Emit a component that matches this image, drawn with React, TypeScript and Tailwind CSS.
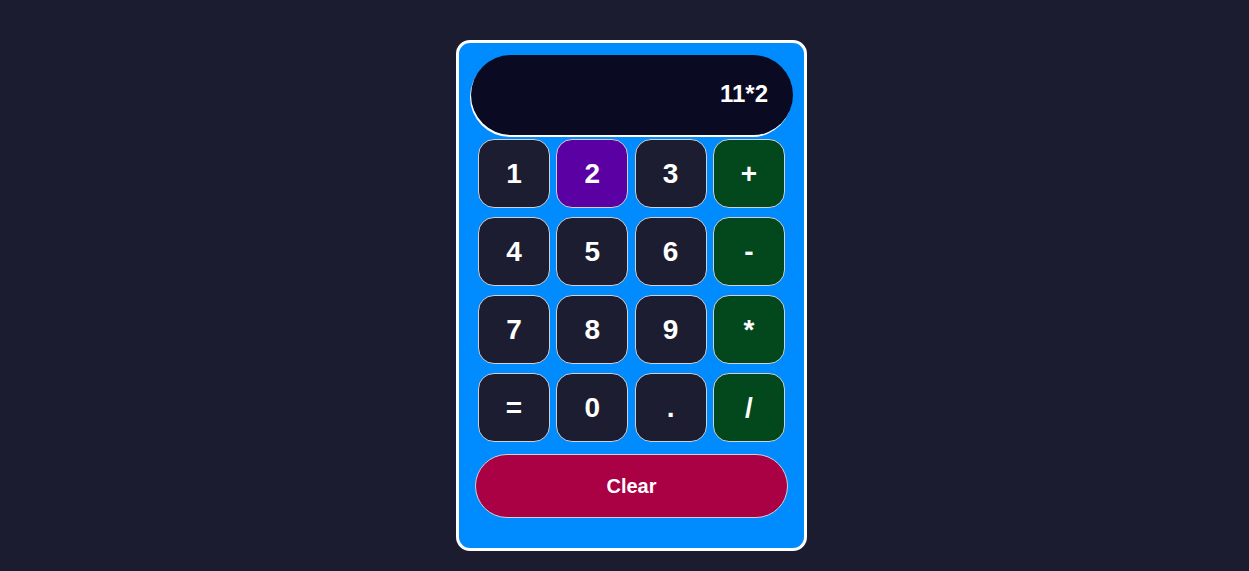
import React from "react";

const keys: { label: string; kind: "num" | "op" | "active" }[] = [
  { label: "1", kind: "num" },
  { label: "2", kind: "active" },
  { label: "3", kind: "num" },
  { label: "+", kind: "op" },
  { label: "4", kind: "num" },
  { label: "5", kind: "num" },
  { label: "6", kind: "num" },
  { label: "-", kind: "op" },
  { label: "7", kind: "num" },
  { label: "8", kind: "num" },
  { label: "9", kind: "num" },
  { label: "*", kind: "op" },
  { label: "=", kind: "num" },
  { label: "0", kind: "num" },
  { label: ".", kind: "num" },
  { label: "/", kind: "op" },
];

export default function App() {
  return (
    <div
      className="flex min-h-[571px] w-full justify-center bg-[#1c1c30] pl-[14px] pt-[40px]"
      style={{ fontFamily: '"Liberation Sans", Arial, sans-serif' }}
    >
      <div className="h-fit w-[351px] rounded-[14px] border-[3px] border-white bg-[#008cff] pl-[12px] pr-[11px] pt-[12px] pb-[30px]">
        <div className="flex h-[80px] w-[322px] items-center justify-end rounded-full bg-[#0a0a22] pb-[3px] pr-[25px] shadow-[-1px_2px_0_#ffffff]">
          <span className="text-[24px] font-bold text-white">11*2</span>
        </div>
        <div className="ml-[7px] mt-[4px] grid w-[307px] grid-cols-4 gap-x-[6.33px] gap-y-[9px]">
          {keys.map((k) => (
            <button
              key={k.label}
              className={
                "flex h-[69px] items-center justify-center rounded-[16px] border border-[#d0d0d8] text-[28px] font-bold text-white " +
                (k.kind === "active"
                  ? "bg-[#5b00a3]"
                  : k.kind === "op"
                  ? "bg-[#03471c]"
                  : "bg-[#1c1d30]")
              }
            >
              {k.label}
            </button>
          ))}
        </div>
        <button className="ml-[4px] mt-[12px] flex h-[64px] w-[313px] items-center justify-center rounded-full border border-[#d0d0d8] bg-[#aa0044] text-[20px] font-bold text-white">
          Clear
        </button>
      </div>
    </div>
  );
}
